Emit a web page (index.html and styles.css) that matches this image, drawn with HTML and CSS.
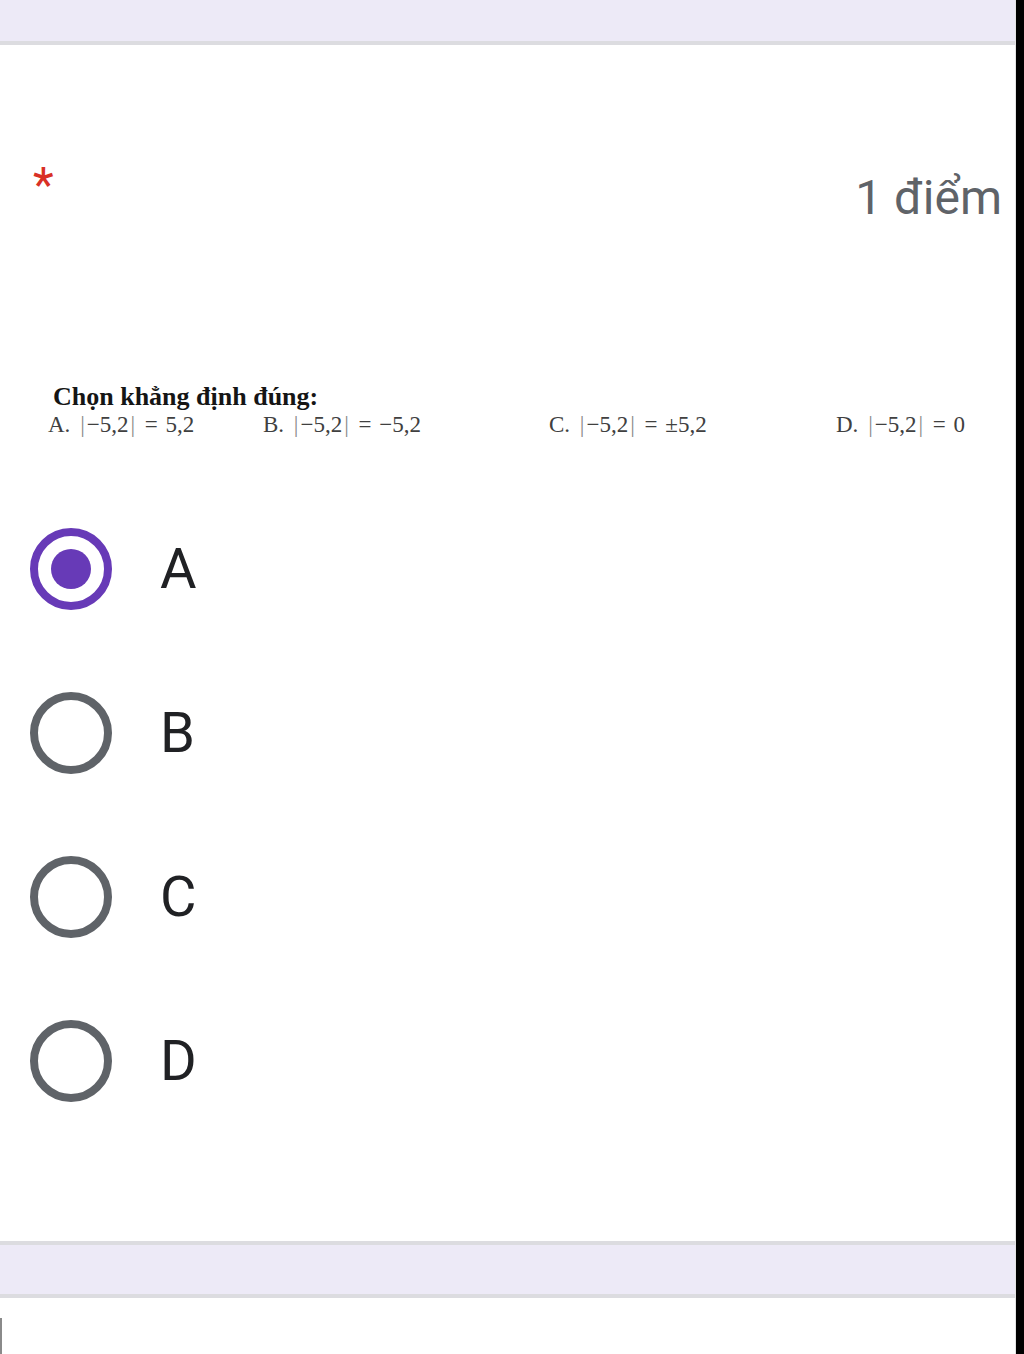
FILE: index.html
```html
<!DOCTYPE html>
<html lang="vi">
<head>
  <meta charset="UTF-8">
  <title>Câu hỏi trắc nghiệm</title>
  <link rel="stylesheet" href="styles.css">
</head>
<body>
  <div class="page">
    <div class="band"></div>

    <div class="card-head">
      <span class="required">*</span>
      <span class="points">1 điểm</span>
    </div>

    <div class="question">
      <div class="question-title">Chọn khẳng định đúng:</div>
      <div class="question-opts">
        <span class="opt opt-a">A. <span class="abs">|</span>−5,2<span class="abs">|</span> = 5,2</span>
        <span class="opt opt-b">B. <span class="abs">|</span>−5,2<span class="abs">|</span> = −5,2</span>
        <span class="opt opt-c">C. <span class="abs">|</span>−5,2<span class="abs">|</span> = ±5,2</span>
        <span class="opt">D. <span class="abs">|</span>−5,2<span class="abs">|</span> = 0</span>
      </div>
    </div>

    <div class="choices" role="radiogroup">
      <div class="choice">
        <span class="radio checked"><span class="dot"></span></span>
        <span class="choice-label">A</span>
      </div>
      <div class="choice">
        <span class="radio"></span>
        <span class="choice-label">B</span>
      </div>
      <div class="choice">
        <span class="radio"></span>
        <span class="choice-label">C</span>
      </div>
      <div class="choice">
        <span class="radio"></span>
        <span class="choice-label">D</span>
      </div>
    </div>

    <div class="band band-bottom"></div>
    <div class="next-card"></div>
  </div>
</body>
</html>
```

FILE: styles.css
```css
html, body {
  margin: 0;
  padding: 0;
}

body {
  background: #000;
  font-family: Roboto, "Noto Sans", sans-serif;
  color: #202124;
}

.page {
  width: 1015px;
  min-height: 1354px;
  background: #fff;
  border-right: 1px solid #e4e4e4;
  overflow: hidden;
}

.band {
  height: 41px;
  background: #edeaf7;
  border-bottom: 4px solid #dcdce0;
}

.band-bottom {
  height: 49px;
  margin-top: 98px;
  border-top: 4px solid #dcdce0;
}

.card-head {
  display: flex;
  justify-content: space-between;
  align-items: flex-start;
  margin-top: 125px;
  padding: 0 13px 0 33px;
  height: 56px;
}

.required {
  color: #d93025;
  font-size: 48px;
  line-height: 46px;
  margin-top: -8px;
}

.points {
  font-size: 48px;
  line-height: 56px;
  color: #5f6368;
}

.question {
  margin-top: 157px;
  padding-left: 48px;
  font-family: "Liberation Serif", "Times New Roman", serif;
}

.question-title {
  padding-left: 5px;
  font-weight: bold;
  font-size: 26px;
  line-height: 28px;
  color: #151515;
}

.question-opts {
  display: flex;
  font-size: 23px;
  line-height: 27px;
  word-spacing: 2px;
  color: #404040;
}

.abs {
  color: #8a8a8a;
  margin: 0 2px;
}

.opt-a {
  width: 215px;
}

.opt-b {
  width: 286px;
}

.opt-c {
  width: 287px;
}

.choices {
  margin-top: 49px;
}

.choice {
  display: flex;
  align-items: center;
  height: 164px;
  padding-left: 30px;
}

.radio {
  width: 66px;
  height: 66px;
  border: 8px solid #5f6368;
  border-radius: 50%;
  display: flex;
  align-items: center;
  justify-content: center;
  flex-shrink: 0;
}

.radio.checked {
  border-color: #673ab7;
}

.dot {
  width: 40px;
  height: 40px;
  border-radius: 50%;
  background: #673ab7;
}

.choice-label {
  margin-left: 48px;
  font-size: 56px;
  color: #202124;
}

.next-card {
  margin-top: 20px;
  width: 2px;
  height: 40px;
  background: #8a8a8a;
}
```
